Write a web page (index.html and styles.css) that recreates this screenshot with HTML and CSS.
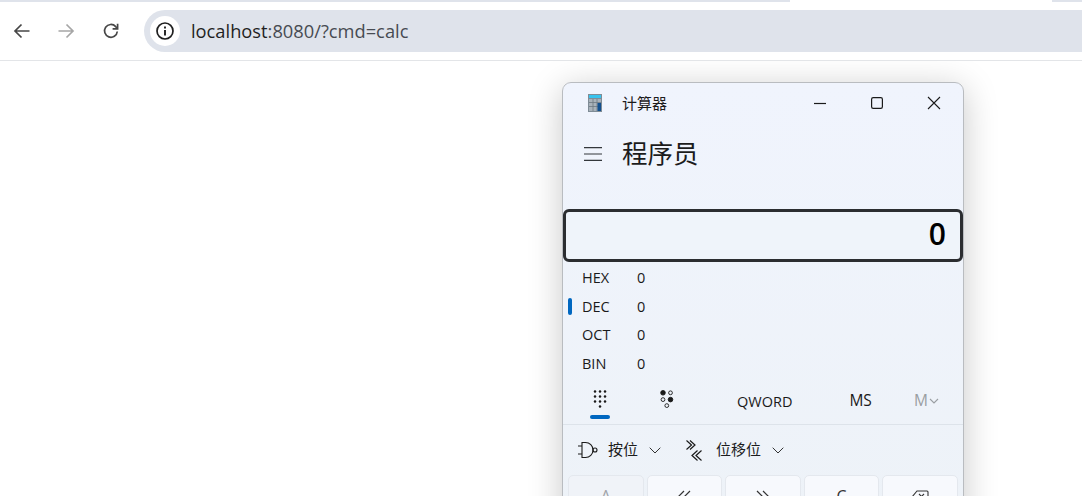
FILE: index.html
```html
<!DOCTYPE html>
<html lang="zh-CN">
<head>
<meta charset="utf-8">
<title>localhost:8080/?cmd=calc</title>
<link rel="stylesheet" href="styles.css">
</head>
<body>
<div class="tabstrip"><div class="strip-left"></div><div class="strip-tab"></div><div class="strip-right"></div></div>
<header class="toolbar">
  <div class="navs">
    <button class="nav"><svg width="20" height="20" viewBox="0 0 20 20" fill="none" stroke="#474747" stroke-width="1.7"><path d="M17.5 10H3M9.5 3.5 3 10l6.5 6.5"/></svg></button>
    <button class="nav"><svg width="20" height="20" viewBox="0 0 20 20" fill="none" stroke="#a6a6a6" stroke-width="1.7"><path d="M2.5 10H17M10.5 3.5 17 10l-6.5 6.5"/></svg></button>
    <button class="nav"><svg width="20" height="20" viewBox="0 0 20 20" fill="none" stroke="#474747" stroke-width="1.7"><path d="M16.3 10.5a6.4 6.4 0 1 1-1.6-4.9l1.6 1.7"/><path d="M16.6 2.8v5h-5" fill="none"/></svg></button>
  </div>
  <div class="omnibox">
    <span class="chip"><svg width="20" height="20" viewBox="0 0 20 20" fill="none" stroke="#1f1f1f" stroke-width="1.7"><circle cx="10" cy="10" r="8"/><path d="M10 9v5.4" stroke-width="1.9"/><path d="M10 5.5v1.9" stroke-width="1.9"/></svg></span>
    <span class="url"><span class="host">localhost</span>:8080/?cmd=calc</span>
  </div>
</header>
<main class="page">
  <section class="calc">
    <div class="titlebar">
      <svg class="appicon" width="14" height="18" viewBox="0 0 14 18"><rect width="14" height="18" fill="#7f8c96"/><rect x="1" y="1" width="12" height="3" fill="#37c3ee"/><rect x="1" y="5" width="12" height="12" fill="#a8b2ba"/><path d="M1 8.5h12M1 12.5h12M5 5v12M9 5v12" stroke="#6d7881" stroke-width=".8"/><rect x="9.5" y="9" width="3.5" height="8" fill="#12508f"/></svg>
      <span class="apptitle">计算器</span>
      <div class="wincontrols">
        <svg class="wc" width="14" height="14" viewBox="0 0 14 14" fill="none" stroke="#1b1b1b" stroke-width="1.2"><path d="M1 7.5h12"/></svg>
        <svg class="wc" width="14" height="14" viewBox="0 0 14 14" fill="none" stroke="#1b1b1b" stroke-width="1.2"><rect x="1.6" y="1.6" width="10.8" height="10.8" rx="1.6"/></svg>
        <svg class="wc" width="14" height="14" viewBox="0 0 14 14" fill="none" stroke="#1b1b1b" stroke-width="1.1"><path d="M1 1l12 12M13 1 1 13"/></svg>
      </div>
    </div>
    <div class="modebar">
      <svg class="burger" width="20" height="16" viewBox="0 0 20 16" fill="none" stroke="#33373b" stroke-width="1.2"><path d="M1 1.7h18M1 8h18M1 14.3h18"/></svg>
      <h1 class="mode">程序员</h1>
    </div>
    <div class="display">0</div>
    <ul class="radix">
      <li class="rrow"><span class="rname">HEX</span><span class="rval">0</span></li>
      <li class="rrow active"><span class="rname">DEC</span><span class="rval">0</span></li>
      <li class="rrow"><span class="rname">OCT</span><span class="rval">0</span></li>
      <li class="rrow"><span class="rname">BIN</span><span class="rval">0</span></li>
    </ul>
    <div class="tabs">
      <div class="tab tab-keypad">
        <svg width="14" height="18" viewBox="0 0 14 18" fill="#1a1a1a"><circle cx="2" cy="1.5" r="1.25"/><circle cx="7" cy="1.5" r="1.25"/><circle cx="12" cy="1.5" r="1.25"/><circle cx="2" cy="6.5" r="1.25"/><circle cx="7" cy="6.5" r="1.25"/><circle cx="12" cy="6.5" r="1.25"/><circle cx="2" cy="11.5" r="1.25"/><circle cx="7" cy="11.5" r="1.25"/><circle cx="12" cy="11.5" r="1.25"/><circle cx="7" cy="16.5" r="1.25"/></svg>
        <span class="tabline"></span>
      </div>
      <div class="tab tab-bits">
        <svg width="14" height="18" viewBox="0 0 14 18" fill="none" stroke="#1a1a1a" stroke-width=".9"><circle cx="3" cy="2.8" r="2.3" fill="#1a1a1a"/><circle cx="10.5" cy="2.8" r="1.9"/><circle cx="3" cy="9.6" r="1.9"/><circle cx="10.5" cy="9.6" r="2.3" fill="#1a1a1a"/><circle cx="6.8" cy="15.6" r="1.9"/></svg>
      </div>
      <div class="word">QWORD</div>
      <div class="ms">MS</div>
      <div class="mlist">M<svg width="10" height="6" viewBox="0 0 10 6" fill="none" stroke="#9a9ea2" stroke-width="1.1"><path d="M1 1l4 4 4-4"/></svg></div>
    </div>
    <div class="ops">
      <div class="op op-bit">
        <svg class="opicon" width="20" height="18" viewBox="0 0 20 18" fill="none" stroke="#1a1a1a" stroke-width="1.1"><path d="M4 1.5h3.5a7.5 7.5 0 0 1 0 15H4zM0 5h4M0 13h4"/><circle cx="17" cy="9" r="2"/></svg>
        <span class="optext">按位</span>
        <svg class="chev" width="12" height="7" viewBox="0 0 12 7" fill="none" stroke="#333" stroke-width="1"><path d="M.7.7 6 6l5.3-5.3"/></svg>
      </div>
      <div class="op op-shift">
        <svg class="opicon" width="16" height="21" viewBox="0 0 16 21" fill="none" stroke="#1a1a1a" stroke-width="1.2"><path d="M.5.5l5 4.5-5 4.5M4 .5l5 4.5-5 4.5"/><path d="M15.5 10.5l-5.5 5 5.5 5M11.5 10.5l-5.5 5 5.5 5"/></svg>
        <span class="optext">位移位</span>
        <svg class="chev" width="12" height="7" viewBox="0 0 12 7" fill="none" stroke="#333" stroke-width="1"><path d="M.7.7 6 6l5.3-5.3"/></svg>
      </div>
    </div>
    <div class="keys">
      <div class="key key-off">A</div>
      <div class="key">
        <svg width="14" height="12" viewBox="0 0 14 12" fill="none" stroke="#333" stroke-width="1.2"><path d="M7 1 1 7l6 6M13 1 7 7l6 6"/></svg>
      </div>
      <div class="key">
        <svg width="14" height="12" viewBox="0 0 14 12" fill="none" stroke="#333" stroke-width="1.2"><path d="M1 1l6 6-6 6M7 1l6 6-6 6"/></svg>
      </div>
      <div class="key">C</div>
      <div class="key">
        <svg width="18" height="12" viewBox="0 0 18 12" fill="none" stroke="#333" stroke-width="1.1"><path d="M6 1h10a1 1 0 0 1 1 1v12H5L1 7z"/><path d="M8 4l5 5M13 4l-5 5"/></svg>
      </div>
    </div>
  </section>
</main>
</body>
</html>
```
FILE: styles.css
```css
* { box-sizing: border-box; }
html, body { margin: 0; padding: 0; height: 100%; overflow: hidden; background: #fff; }
body { width: 1082px; height: 496px; font-family: "Open Sans", "Noto Sans CJK SC", sans-serif; color: #1a1a1a; }
.tabstrip { height: 2px; display: flex; }
.strip-left { width: 790px; background: #dfe3eb; }
.strip-tab { width: 262px; background: #fff; }
.strip-right { flex: 1; background: #dfe3eb; }
.toolbar { height: 59px; display: flex; align-items: center; background: #fff; border-bottom: 1px solid #e3e5e8; }
.navs { display: flex; gap: 12px; width: 144px; }
.nav { width: 32px; height: 32px; border: 0; background: none; padding: 0; display: flex; align-items: center; justify-content: center; }
.nav:first-child { margin-left: 6px; }
.nav:last-child { margin-left: 1px; }
.omnibox { flex: 1; height: 42px; margin-top: -1px; background: #dfe3eb; border-radius: 21px 0 0 21px; display: flex; align-items: center; padding-left: 6px; }
.chip { width: 30px; height: 30px; border-radius: 50%; background: #fff; display: flex; align-items: center; justify-content: center; }
.url { margin-left: 11px; font-size: 18.3px; color: #474b52; font-family: "Open Sans", sans-serif; }
.host { color: #1f1f1f; }
.page { position: relative; height: 435px; overflow: hidden; }
.calc { position: absolute; left: 562px; top: 21px; width: 402px; height: 500px; background: linear-gradient(#f0f4fd, #edf2f7); border: 1px solid #b9bcc0; border-radius: 9px; box-shadow: 0 6px 34px rgba(0,0,0,.22); }
.titlebar { height: 40px; display: flex; align-items: center; }
.appicon { margin-left: 25px; }
.apptitle { margin-left: 20px; margin-top: -2px; font-size: 15px; font-family: "Noto Sans CJK SC", sans-serif; color: #1c1c1c; }
.wincontrols { margin-left: auto; display: flex; gap: 43px; padding-right: 22px; }
.modebar { height: 62px; display: flex; align-items: center; padding-top: 1px; padding-bottom: 4px; }
.burger { margin-left: 20px; margin-top: 2px; }
.mode { margin: 0 0 0 19px; font-size: 25.5px; font-weight: 400; line-height: 1.2; font-family: "Noto Sans CJK SC", sans-serif; color: #1c1c1c; }
.display { margin: 24px 0 0; height: 53px; border: 3px solid #2b2d30; border-radius: 6px; background: #eff4fa; text-align: right; font-size: 30px; font-weight: 600; line-height: 44px; padding-right: 14px; color: #000; }
.radix { list-style: none; margin: 1.4px 0 0; padding: 0; }
.rrow { height: 28.6px; display: flex; align-items: center; font-size: 14.5px; color: #1a1a1a; position: relative; padding-left: 19px; }
.rname { width: 55px; }
.active::before { content: ""; position: absolute; left: 5px; top: 6px; width: 4px; height: 17px; border-radius: 2px; background: #0067c0; }
.tabs { height: 47.6px; position: relative; display: flex; border-bottom: 1px solid #dde3ea; }
.tab { position: relative; display: flex; justify-content: center; }
.tab-keypad { margin-left: 30px; width: 14px; padding-top: 12px; }
.tabline { position: absolute; top: 37px; left: -3px; width: 20px; height: 4px; border-radius: 2px; background: #0067c0; }
.tab-bits { margin-left: 53px; width: 14px; padding-top: 12px; }
.word { margin-left: 63px; padding-top: 14px; font-size: 14.5px; }
.ms { margin-left: 57px; padding-top: 11px; font-size: 15.5px; }
.mlist { margin-left: 42px; padding-top: 11px; font-size: 15.5px; color: #9a9ea2; }
.mlist svg { margin-left: 1px; vertical-align: 2px; }
.ops { height: 50px; display: flex; align-items: center; }
.op { display: flex; align-items: center; }
.op-bit { margin-left: 15px; }
.op-shift { margin-left: 25px; }
.opicon { flex: none; }
.optext { margin-left: 10px; font-size: 15px; line-height: 20px; margin-top: -3px; font-family: "Noto Sans CJK SC", sans-serif; color: #1c1c1c; }
.chev { margin-left: 11px; }
.op-shift .optext { margin-left: 14px; }
.keys { display: flex; gap: 3px; padding: 0 5px; }
.key { flex: 1; height: 60px; background: #f7f9fd; border: 1px solid #e4e8ee; border-radius: 5px; display: flex; justify-content: center; align-items: flex-start; padding-top: 14px; font-size: 16px; line-height: 12px; color: #333; }
.key-off { background: #f0f3f8; color: #a0a4a8; }
```
